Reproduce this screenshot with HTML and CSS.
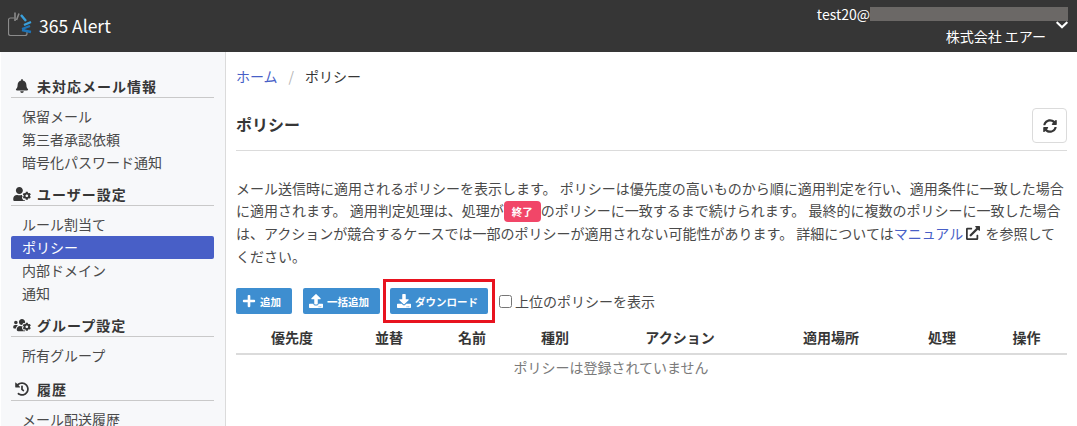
FILE: index.html
```html
<!DOCTYPE html>
<html lang="ja">
<head>
    <meta charset="UTF-8">
    <meta name="viewport" content="width=device-width, initial-scale=1.0">
    <title>365 Alert</title>
    <link rel="stylesheet" href="styles.css">
</head>

<body>

    <header class="navbar">
        <a class="brand" href="#">
            <svg class="brand-logo" viewBox="0 0 24 25" width="24" height="25">
                <path d="M6 6H2.500a2 2 0 0 0-2 2v13.500a2 2 0 0 0 2 2h14.500a2 2 0 0 0 2-2V20" fill="none" stroke="#8b8b8b" stroke-width="1.200"/>
                <path d="M7 .5V9M11 1.500L8.500 8" fill="none" stroke="#8b8b8b" stroke-width="1.600"/>
                <path d="M13 3l5 6M23 10l-7 3" fill="none" stroke="#3aa0dc" stroke-width="2.400"/>
                <path d="M14 17l8-3M14 18l9 2" fill="none" stroke="#1d74b8" stroke-width="2.400"/>
            </svg>
            <span>365 Alert</span>
        </a>
        <div class="account">
            <div class="account-text">
                <div class="account-mail">test20@<span class="masked"></span></div>
                <div class="account-company">株式会社 エアー</div>
            </div>
            <svg class="account-arrow" viewBox="0 0 448 512"><path d="M207.029 381.476L12.686 187.132c-9.373-9.373-9.373-24.569 0-33.941l22.667-22.667c9.357-9.357 24.522-9.375 33.901-.04L224 284.505l154.745-154.021c9.379-9.335 24.544-9.317 33.901.04l22.667 22.667c9.373 9.373 9.373 24.569 0 33.941L240.971 381.476c-9.373 9.372-24.569 9.372-33.942 0z"/></svg>
        </div>
    </header>

    <div class="page">
        <aside class="sidebar">
            <p class="menu-label">
                <svg class="menu-icon" viewBox="0 0 448 512"><path d="M224 512c35.32 0 63.97-28.65 63.97-64H160.03c0 35.35 28.65 64 63.97 64zm215.39-149.71c-19.32-20.76-55.47-51.99-55.47-154.29 0-77.7-54.48-139.9-127.94-155.16V32c0-17.67-14.32-32-31.98-32s-31.98 14.33-31.98 32v20.84C118.56 68.1 64.08 130.3 64.08 208c0 102.3-36.15 133.53-55.47 154.29-6 6.45-8.66 14.16-8.61 21.71.11 16.4 12.98 32 32.1 32h383.8c19.12 0 32-15.6 32.1-32 .05-7.55-2.61-15.27-8.61-21.71z"/></svg>
                未対応メール情報
            </p>
            <ul class="menu-list">
                <li><a href="#">保留メール</a></li>
                <li><a href="#">第三者承認依頼</a></li>
                <li><a href="#">暗号化パスワード通知</a></li>
            </ul>
            <p class="menu-label">
                <svg class="menu-icon" viewBox="0 0 640 512"><path d="M610.5 341.3c2.6-14.1 2.6-28.5 0-42.6l25.8-14.9c3-1.7 4.3-5.2 3.3-8.5-6.7-21.6-18.2-41.2-33.2-57.4-2.3-2.5-6-3.1-9-1.4l-25.8 14.9c-10.9-9.3-23.4-16.5-36.9-21.3v-29.8c0-3.4-2.4-6.4-5.7-7.1-22.3-5-45-4.8-66.2 0-3.3.7-5.7 3.7-5.7 7.1v29.8c-13.5 4.8-26 12-36.9 21.3l-25.8-14.9c-2.9-1.7-6.7-1.1-9 1.4-15 16.2-26.5 35.8-33.2 57.4-1 3.3.4 6.8 3.3 8.5l25.8 14.9c-2.6 14.1-2.6 28.5 0 42.6l-25.8 14.9c-3 1.7-4.3 5.2-3.3 8.5 6.7 21.6 18.2 41.1 33.2 57.4 2.3 2.5 6 3.1 9 1.4l25.8-14.9c10.9 9.3 23.4 16.5 36.9 21.3v29.8c0 3.4 2.4 6.4 5.7 7.1 22.3 5 45 4.8 66.2 0 3.3-.7 5.7-3.7 5.7-7.1v-29.8c13.5-4.8 26-12 36.9-21.3l25.8 14.9c2.9 1.7 6.7 1.1 9-1.4 15-16.2 26.5-35.8 33.2-57.4 1-3.3-.4-6.8-3.3-8.5l-25.8-14.9zM496 368.5c-26.8 0-48.5-21.8-48.5-48.5s21.8-48.5 48.5-48.5 48.5 21.8 48.5 48.5-21.7 48.5-48.5 48.5zM224 256c70.7 0 128-57.3 128-128S294.7 0 224 0 96 57.3 96 128s57.3 128 128 128zm201.2 226.5c-2.3-1.2-4.6-2.6-6.8-3.9l-7.9 4.6c-6 3.4-12.8 5.3-19.6 5.3-10.9 0-21.4-4.6-28.9-12.6-18.3-19.8-32.3-43.9-40.2-69.6-5.5-17.7 1.9-36.4 17.9-45.7l7.9-4.6c-.1-2.6-.1-5.2 0-7.8l-7.9-4.6c-16-9.2-23.4-28-17.9-45.7.9-2.9 2.2-5.8 3.2-8.7-3.8-.3-7.5-1.2-11.4-1.2h-16.7c-22.2 10.2-46.9 16-72.9 16s-50.6-5.8-72.9-16h-16.7C60.2 288 0 348.2 0 422.4V464c0 26.5 21.5 48 48 48h352c10.1 0 19.5-3.2 27.2-8.5-1.2-3.8-2-7.7-2-11.8v-9.2z"/></svg>
                ユーザー設定
            </p>
            <ul class="menu-list">
                <li><a href="#">ルール割当て</a></li>
                <li><a href="#" class="is-active">ポリシー</a></li>
                <li><a href="#">内部ドメイン</a></li>
                <li><a href="#">通知</a></li>
            </ul>
            <p class="menu-label">
                <svg class="menu-icon" viewBox="0 0 640 512"><path d="M610.5 341.3c2.6-14.1 2.6-28.5 0-42.6l25.8-14.9c3-1.7 4.3-5.2 3.3-8.5-6.7-21.6-18.2-41.2-33.2-57.4-2.3-2.5-6-3.1-9-1.4l-25.8 14.9c-10.9-9.3-23.4-16.5-36.9-21.3v-29.8c0-3.4-2.4-6.4-5.7-7.1-22.3-5-45-4.8-66.2 0-3.3.7-5.7 3.7-5.7 7.1v29.8c-13.5 4.8-26 12-36.9 21.3l-25.8-14.9c-2.9-1.7-6.7-1.1-9 1.4-15 16.2-26.5 35.8-33.2 57.4-1 3.3.4 6.8 3.3 8.5l25.8 14.9c-2.6 14.1-2.6 28.5 0 42.6l-25.8 14.9c-3 1.7-4.3 5.2-3.3 8.5 6.7 21.6 18.2 41.1 33.2 57.4 2.3 2.5 6 3.1 9 1.4l25.8-14.9c10.9 9.3 23.4 16.5 36.9 21.3v29.8c0 3.4 2.4 6.4 5.7 7.1 22.3 5 45 4.8 66.2 0 3.3-.7 5.7-3.7 5.7-7.1v-29.8c13.5-4.8 26-12 36.9-21.3l25.8 14.9c2.9 1.7 6.7 1.1 9-1.4 15-16.2 26.5-35.8 33.2-57.4 1-3.3-.4-6.8-3.3-8.5l-25.8-14.9zM496 368.5c-26.8 0-48.5-21.8-48.5-48.5s21.8-48.5 48.5-48.5 48.5 21.8 48.5 48.5-21.7 48.5-48.5 48.5zM96 224c35.3 0 64-28.7 64-64s-28.7-64-64-64-64 28.7-64 64 28.7 64 64 64zm224 32c1.9 0 3.7-.5 5.6-.6 8.3-21.7 20.5-42.1 36.3-59.2 7.4-8 17.9-12.6 28.9-12.6 6.9 0 13.7 1.8 19.6 5.3l7.9 4.6c.8-.5 1.6-.9 2.4-1.4 7-14.6 11.2-30.8 11.2-48 0-61.9-50.1-112-112-112S208 82.1 208 144c0 61.9 50.1 112 112 112zm105.2 194.5c-2.3-1.2-4.6-2.6-6.8-3.9-8.2 4.8-15.3 9.8-27.5 9.8-10.9 0-21.4-4.6-28.9-12.6-18.3-19.8-32.3-43.9-40.2-69.6-10.7-34.5 24.9-49.7 25.8-50.3-.1-2.6-.1-5.2 0-7.8l-7.9-4.6c-3.8-2.2-7-5-9.8-8.1-3.3.2-6.5.6-9.8.6-24.6 0-47.6-6-68.5-16h-8.3C179.6 288 128 339.6 128 403.2V432c0 26.5 21.5 48 48 48h255.4c-3.7-6-6.2-12.8-6.2-20.3v-9.2zM173.1 274.6C161.5 263.1 145.6 256 128 256H64c-35.3 0-64 28.7-64 64v32c0 17.7 14.3 32 32 32h65.9c6.3-47.4 34.9-87.3 75.2-109.4z"/></svg>
                グループ設定
            </p>
            <ul class="menu-list">
                <li><a href="#">所有グループ</a></li>
            </ul>
            <p class="menu-label">
                <svg class="menu-icon" viewBox="0 0 512 512"><path d="M504 255.531c.253 136.64-111.18 248.372-247.82 248.468-59.015.042-113.223-20.53-155.822-54.911-11.077-8.94-11.905-25.541-1.839-35.607l11.267-11.267c8.609-8.609 22.353-9.551 31.891-1.984C173.062 425.135 212.781 440 256 440c101.705 0 184-82.311 184-184 0-101.705-82.311-184-184-184-48.814 0-93.149 18.969-126.068 49.932l50.754 50.754c10.08 10.08 2.941 27.314-11.313 27.314H24c-8.837 0-16-7.163-16-16V38.627c0-14.254 17.234-21.393 27.314-11.314l49.372 49.372C129.209 34.136 189.552 8 256 8c136.81 0 247.747 110.78 248 247.531zm-180.912 78.784l9.823-12.63c8.138-10.463 6.253-25.542-4.21-33.679L288 256.349V152c0-13.255-10.745-24-24-24h-16c-13.255 0-24 10.745-24 24v135.651l65.409 50.874c10.463 8.137 25.541 6.253 33.679-4.21z"/></svg>
                履歴
            </p>
            <ul class="menu-list">
                <li><a href="#">メール配送履歴</a></li>
            </ul>
        </aside>

        <main class="content">
            <nav class="breadcrumb">
                <a href="#">ホーム</a>
                <span class="breadcrumb-sep">/</span>
                <span>ポリシー</span>
            </nav>

            <div class="title-row">
                <h1 class="title">ポリシー</h1>
                <button type="button" class="reload-btn">
                    <svg viewBox="0 0 512 512" width="14" height="14"><path d="M370.72 133.28C339.458 104.008 298.888 87.962 255.848 88c-77.458.068-144.328 53.178-162.791 126.85-1.344 5.363-6.122 9.15-11.651 9.15H24.103c-7.498 0-13.194-6.807-11.807-14.176C33.933 94.924 134.813 8 256 8c66.448 0 126.791 26.136 171.315 68.685L463.03 40.97C478.149 25.851 504 36.559 504 57.941V192c0 13.255-10.745 24-24 24H345.941c-21.382 0-32.09-25.851-16.971-40.971l41.75-41.749zM32 296h134.059c21.382 0 32.09 25.851 16.971 40.971l-41.75 41.75c31.262 29.273 71.835 45.319 114.876 45.28 77.418-.07 144.315-53.144 162.787-126.849 1.344-5.363 6.122-9.15 11.651-9.15h57.304c7.498 0 13.194 6.807 11.807 14.176C478.067 417.076 377.187 504 256 504c-66.448 0-126.791-26.136-171.315-68.685L48.97 471.03C33.851 486.149 8 475.441 8 454.059V320c0-13.255 10.745-24 24-24z"/></svg>
                </button>
            </div>

            <p class="description">
                メール送信時に適用されるポリシーを表示します。 ポリシーは優先度の高いものから順に適用判定を行い、適用条件に一致した場合に適用されます。 適用判定処理は、処理が<span class="tag-end">終了</span>のポリシーに一致するまで続けられます。 最終的に複数のポリシーに一致した場合は、アクションが競合するケースでは一部のポリシーが適用されない可能性があります。 詳細については<a href="#">マニュアル</a>
                <svg class="link-icon" viewBox="0 0 512 512"><path d="M432,320H400a16,16,0,0,0-16,16V448H64V128H208a16,16,0,0,0,16-16V80a16,16,0,0,0-16-16H48A48,48,0,0,0,0,112V464a48,48,0,0,0,48,48H400a48,48,0,0,0,48-48V336A16,16,0,0,0,432,320ZM488,0h-128c-21.37,0-32.05,25.91-17,41l35.73,35.73L135,320.37a24,24,0,0,0,0,34L157.67,377a24,24,0,0,0,34,0L435.28,133.32,471,169c15,15,41,4.5,41-17V24A24,24,0,0,0,488,0Z"/></svg>
                を参照してください。
            </p>

            <div class="toolbar">
                <button type="button" class="btn btn-add">
                    <svg viewBox="0 0 448 512"><path d="M416 208H272V64c0-17.67-14.33-32-32-32h-32c-17.67 0-32 14.33-32 32v144H32c-17.67 0-32 14.33-32 32v32c0 17.67 14.33 32 32 32h144v144c0 17.67 14.33 32 32 32h32c17.67 0 32-14.33 32-32V304h144c17.67 0 32-14.33 32-32v-32c0-17.67-14.33-32-32-32z"/></svg>
                    追加
                </button>
                <button type="button" class="btn btn-bulk">
                    <svg viewBox="0 0 512 512"><path d="M296 384h-80c-13.3 0-24-10.7-24-24V192h-87.7c-17.8 0-26.7-21.5-14.1-34.1L242.3 5.7c7.5-7.5 19.8-7.5 27.3 0l152.2 152.2c12.6 12.6 3.7 34.1-14.1 34.1H320v168c0 13.3-10.7 24-24 24zm216-8v112c0 13.3-10.7 24-24 24H24c-13.3 0-24-10.7-24-24V376c0-13.3 10.7-24 24-24h136v8c0 30.9 25.1 56 56 56h80c30.9 0 56-25.1 56-56v-8h136c13.3 0 24 10.7 24 24zm-124 88c0-11-9-20-20-20s-20 9-20 20 9 20 20 20 20-9 20-20zm64 0c0-11-9-20-20-20s-20 9-20 20 9 20 20 20 20-9 20-20z"/></svg>
                    一括追加
                </button>
                <button type="button" class="btn btn-download">
                    <svg viewBox="0 0 512 512"><path d="M216 0h80c13.3 0 24 10.7 24 24v168h87.7c17.8 0 26.7 21.5 14.1 34.1L269.7 378.3c-7.5 7.5-19.8 7.5-27.3 0L90.1 226.1c-12.6-12.6-3.7-34.1 14.1-34.1H192V24c0-13.3 10.7-24 24-24zm296 376v112c0 13.3-10.7 24-24 24H24c-13.3 0-24-10.7-24-24V376c0-13.3 10.7-24 24-24h146.7l49 49c20.1 20.1 52.5 20.1 72.6 0l49-49H488c13.3 0 24 10.7 24 24zm-124 88c0-11-9-20-20-20s-20 9-20 20 9 20 20 20 20-9 20-20zm64 0c0-11-9-20-20-20s-20 9-20 20 9 20 20 20 20-9 20-20z"/></svg>
                    ダウンロード
                </button>
                <label class="check-label"><input type="checkbox">上位のポリシーを表示</label>
            </div>

            <table class="policy-table">
                <thead>
                    <tr>
                        <th class="col-priority">優先度</th>
                        <th class="col-sort">並替</th>
                        <th class="col-name">名前</th>
                        <th class="col-type">種別</th>
                        <th class="col-action">アクション</th>
                        <th class="col-place">適用場所</th>
                        <th class="col-process">処理</th>
                        <th class="col-ops">操作</th>
                    </tr>
                </thead>
                <tbody>
                    <tr>
                        <td colspan="7">ポリシーは登録されていません</td>
                        <td></td>
                    </tr>
                </tbody>
            </table>
        </main>
    </div>

</body>
</html>
```

FILE: styles.css
```css
html, body {
    height: 100%;
    margin: 0;
    overflow: hidden;
}
body {
    font-family: "Noto Sans CJK JP", "Noto Sans", sans-serif;
    font-size: 14px;
    line-height: 1.6;
    color: #4a4a4a;
    background-color: #ffffff;
}
a {
    color: #485fc7;
    text-decoration: none;
}

/* header */
.navbar {
    display: flex;
    justify-content: space-between;
    height: 52px;
    padding: 0 9px 0 8px;
    background-color: #363636;
    color: #ffffff;
}
.brand {
    display: flex;
    align-items: center;
    gap: 7px;
    color: #ffffff;
    font-size: 17.5px;
}
.brand-logo {
    margin-bottom: 3px;
}
.account {
    display: flex;
    gap: 10px;
}
.account-text {
    text-align: right;
    line-height: 22px;
    padding-top: 4px;
}
.account-mail {
    display: flex;
    align-items: center;
    margin-right: -22px;
    height: 20px;
}
.masked {
    display: inline-block;
    width: 198px;
    height: 14px;
    background-color: #6b6866;
}
.account-company {
    margin-top: 1px;
}
.account-arrow {
    width: 12px;
    height: 14px;
    margin-top: 18px;
    fill: #ffffff;
}

/* sidebar */
.page {
    display: flex;
    height: calc(100% - 52px);
}
.sidebar {
    flex: 0 0 225px;
    margin-left: 1px;
    padding: 23px 11px 0 10px;
    box-sizing: border-box;
    background-color: #f7f8fa;
    border-right: 1px solid #dbdbdb;
}
.menu-label {
    display: flex;
    align-items: center;
    gap: 6px;
    margin: 0 0 7px;
    height: 22px;
    padding-left: 2px;
    border-bottom: 1px solid #c9c9c9;
    font-weight: bold;
    color: #363636;
    letter-spacing: 1px;
}
.menu-icon {
    width: 18px;
    height: 14px;
    fill: #363636;
}
.menu-list {
    list-style: none;
    margin: 0 0 9px;
    padding: 0;
}
.menu-list:nth-of-type(3) {
    margin-bottom: 11px;
}
.menu-list a {
    display: block;
    height: 23px;
    line-height: 23px;
    padding-left: 11px;
    border-radius: 2px;
    color: #4a4a4a;
}
.menu-list a.is-active {
    background-color: #485fc7;
    color: #ffffff;
}

/* main */
.content {
    flex: 1;
    min-width: 0;
    padding: 13px 10px 0 10px;
}
.breadcrumb {
    display: flex;
    gap: 11px;
    line-height: 22px;
    color: #363636;
}
.breadcrumb-sep {
    color: #b5b5b5;
}
.title-row {
    display: flex;
    justify-content: space-between;
    align-items: center;
    margin-top: 21px;
    padding-bottom: 7px;
    border-bottom: 1px solid #dbdbdb;
}
.title {
    margin: 0 0 2px;
    font-size: 16px;
    font-weight: bold;
    color: #363636;
}
.reload-btn {
    display: flex;
    align-items: center;
    justify-content: center;
    width: 35px;
    height: 35px;
    padding: 0;
    background-color: #ffffff;
    border: 1px solid #dbdbdb;
    border-radius: 4px;
}
.reload-btn svg {
    fill: #363636;
}
.description {
    margin: 26px 0 0;
}
.description a {
    color: #485fc7;
}
.tag-end {
    display: inline-block;
    height: 21px;
    padding: 0 8px;
    line-height: 21px;
    font-size: 10.5px;
    font-weight: bold;
    border-radius: 4px;
    background-color: #f14668;
    color: #ffffff;
}
.link-icon {
    width: 14px;
    height: 14px;
    margin: 0 2px -1px 0;
    fill: #363636;
}
.toolbar {
    display: flex;
    align-items: center;
    margin-top: 21px;
}
.btn {
    display: flex;
    align-items: center;
    justify-content: center;
    gap: 4px;
    height: 26px;
    padding: 0 5px 0 0;
    background-color: #3e8ed0;
    border: none;
    border-radius: 2px;
    color: #ffffff;
    font-family: inherit;
    font-size: 10.5px;
    font-weight: bold;
}
.btn svg {
    width: 14px;
    height: 14px;
    fill: #ffffff;
}
.btn-add {
    width: 56px;
    margin-right: 11px;
}
.btn-bulk {
    width: 77px;
    margin-right: 10px;
}
.btn-download {
    position: relative;
    width: 98px;
    margin-right: 11px;
    padding-right: 3px;
}
/* red annotation box */
.btn-download::after {
    content: "";
    position: absolute;
    top: -9px;
    right: -7px;
    bottom: -9px;
    left: -7px;
    border: 3px solid #e8131f;
}
.check-label {
    display: flex;
    align-items: center;
    gap: 3px;
}
.check-label input {
    width: 13px;
    height: 13px;
    margin: 0;
}
.policy-table {
    width: 100%;
    margin-top: 9px;
    table-layout: fixed;
    border-collapse: collapse;
}
.policy-table th {
    height: 29px;
    padding: 0 0 1px;
    font-weight: bold;
    text-align: center;
    color: #363636;
    border-bottom: 2px solid #dbdbdb;
}
.policy-table td {
    padding: 1px 0;
    text-align: center;
    color: #7a7a7a;
}
.col-priority { width: 112px; }
.col-sort { width: 82px; }
.col-name { width: 84px; }
.col-type { width: 82px; }
.col-action { width: 168px; }
.col-place { width: 134px; }
.col-process { width: 88px; }
```
